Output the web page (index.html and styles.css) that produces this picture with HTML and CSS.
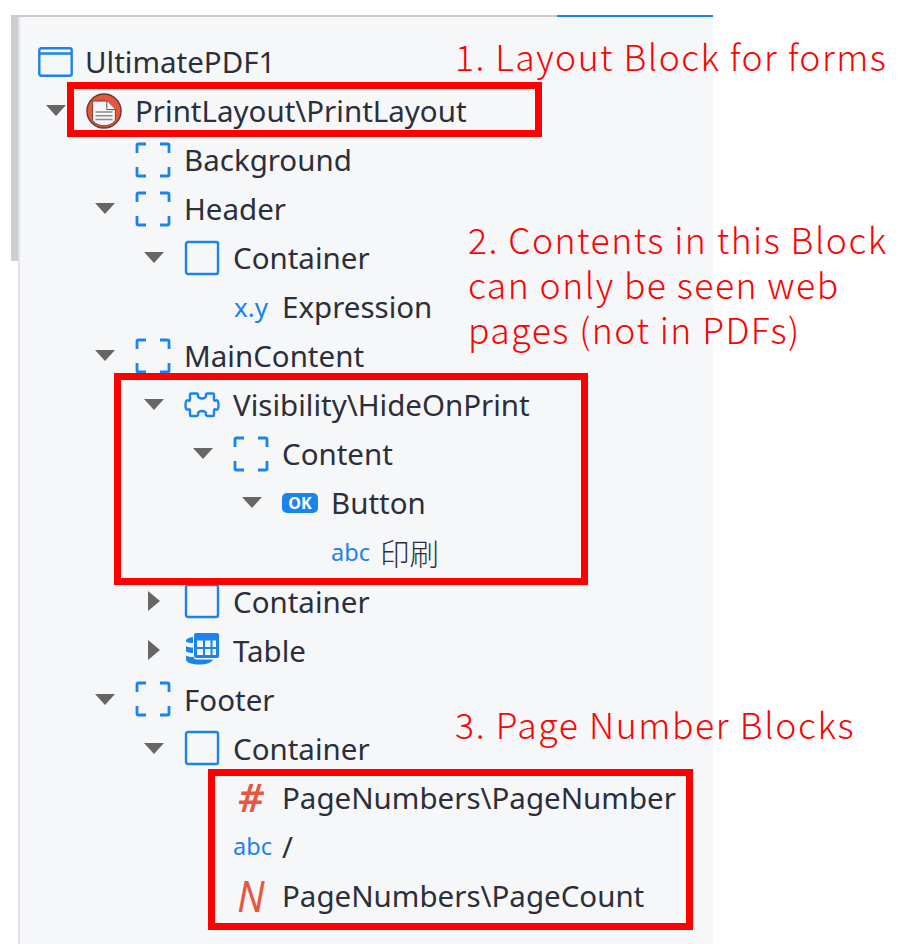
FILE: index.html
```html
<!DOCTYPE html>
<html lang="en">
<head>
    <meta charset="UTF-8">
    <title>Widget tree</title>
    <link rel="stylesheet" href="styles.css">
</head>
<body>
    <svg class="defs" width="0" height="0">
        <symbol id="placeholder" viewBox="0 0 36 36">
            <path d="M2 11V3.500A1.500 1.500 0 0 1 3.500 2H11M25 2h7.500A1.500 1.500 0 0 1 34 3.500V11M34 25v7.500a1.500 1.500 0 0 1-1.500 1.500H25M11 34H3.500A1.500 1.500 0 0 1 2 32.500V25" fill="none" stroke="#1b83ee" stroke-width="2.800"/>
        </symbol>
        <symbol id="container" viewBox="0 0 36 36">
            <rect x="2" y="2" width="32" height="32" rx="2" fill="none" stroke="#1b83ee" stroke-width="2.400"/>
        </symbol>
    </svg>

    <div class="frame">
        <div class="scrollbar"></div>
        <div class="panel">
            <ul class="tree">
                <li class="row">
                    <svg class="icon screen-icon" viewBox="0 0 35 30"><rect x="1.300" y="1.300" width="32.400" height="27.400" rx="2" fill="none" stroke="#1b83ee" stroke-width="2.400"/><path d="M1 6.500h33" stroke="#1b83ee" stroke-width="2.400"/></svg>
                    <span>UltimatePDF1</span>
                </li>
                <li class="row lvl-0">
                    <i class="arrow down"></i>
                    <svg class="icon" viewBox="0 0 38 38"><circle cx="19" cy="19" r="18" fill="#e8563f" stroke="#6b3a30" stroke-width="1.500"/><path d="M7 8.500h15l9 9V29a15.500 15.500 0 0 1-24 0z" fill="#f6f6f6" stroke="#6b3a30"/><path d="M22 8.500v9h9" fill="#fff" stroke="#6b3a30"/><path d="M10 20h18M10 24h18M10 28h18" stroke="#8d8d8d" stroke-width="1.500"/></svg>
                    <span>PrintLayout\PrintLayout</span>
                </li>
                <li class="row lvl-1">
                    <i class="arrow"></i>
                    <svg class="icon"><use href="#placeholder"/></svg>
                    <span>Background</span>
                </li>
                <li class="row lvl-1">
                    <i class="arrow down"></i>
                    <svg class="icon"><use href="#placeholder"/></svg>
                    <span>Header</span>
                </li>
                <li class="row lvl-2">
                    <i class="arrow down"></i>
                    <svg class="icon"><use href="#container"/></svg>
                    <span>Container</span>
                </li>
                <li class="row lvl-3">
                    <i class="arrow"></i>
                    <b class="glyph expr">x.y</b>
                    <span>Expression</span>
                </li>
                <li class="row lvl-1">
                    <i class="arrow down"></i>
                    <svg class="icon"><use href="#placeholder"/></svg>
                    <span>MainContent</span>
                </li>
                <li class="row lvl-2">
                    <i class="arrow down"></i>
                    <svg class="icon" viewBox="-1 -5 36 36"><path d="M6 1.500H11.500C13 1.500 13.500 2.500 13 3.500C12.500 5 14.500 6.500 17 6.500C19.500 6.500 21.500 5 21 3.500C20.500 2.500 21 1.500 22.500 1.500H28A1 1 0 0 1 29 2.500V7.500C29 8.800 30 9 31 8.500C32.500 7.500 33.500 9.500 33.500 13C33.500 16.500 32.500 18.500 31 17.500C30 17 29 17.200 29 18.500V23A1 1 0 0 1 28 24H22.500C21 24 20.500 23 21 22C21.500 20.500 19.500 19 17 19C14.500 19 12.500 20.500 13 22C13.500 23 13 24 11.500 24H6A1 1 0 0 1 5 23V18.500C5 17.200 4 17 3 17.500C1.500 18.500 .5 16.500 .5 13C.5 9.500 1.500 7.500 3 8.500C4 9 5 8.800 5 7.500V2.500A1 1 0 0 1 6 1.500Z" fill="none" stroke="#1b83ee" stroke-width="2.400"/></svg>
                    <span>Visibility\HideOnPrint</span>
                </li>
                <li class="row lvl-3">
                    <i class="arrow down"></i>
                    <svg class="icon"><use href="#placeholder"/></svg>
                    <span>Content</span>
                </li>
                <li class="row lvl-4">
                    <i class="arrow down"></i>
                    <b class="glyph ok">OK</b>
                    <span>Button</span>
                </li>
                <li class="row lvl-5">
                    <i class="arrow"></i>
                    <b class="glyph abc">abc</b>
                    <span class="jp">印刷</span>
                </li>
                <li class="row lvl-2">
                    <i class="arrow right"></i>
                    <svg class="icon"><use href="#container"/></svg>
                    <span>Container</span>
                </li>
                <li class="row lvl-2">
                    <i class="arrow right"></i>
                    <svg class="icon" viewBox="0 0 36 36"><path d="M2 9c0-2 3-3.500 7-4v6c-3.500 0-7-.5-7-2zM2 14c2 1 4.500 1.500 7 1.500V21c-4 0-7-1-7-2.500zM2 23.500c2 1 4.500 1.500 7.500 1.500.5 1.500 1.500 2.500 3 2.500H29c-1.500 3.500-7 5-13 5-8 0-14-2-14-5z" fill="#1b83ee"/><path d="M12 1h21a2 2 0 0 1 2 2v21a2 2 0 0 1-2 2H12a2 2 0 0 1-2-2V3a2 2 0 0 1 2-2z" fill="#1b83ee"/><path d="M13 8.500h6v6.500h-6zM21 8.500h5.500v6.500H21zM28.500 8.500H32v6.500h-3.500zM13 17h6v6h-6zM21 17h5.500v6H21zM28.500 17H32v6h-3.500z" fill="#f6f7f9"/></svg>
                    <span>Table</span>
                </li>
                <li class="row lvl-1">
                    <i class="arrow down"></i>
                    <svg class="icon"><use href="#placeholder"/></svg>
                    <span>Footer</span>
                </li>
                <li class="row lvl-2">
                    <i class="arrow down"></i>
                    <svg class="icon"><use href="#container"/></svg>
                    <span>Container</span>
                </li>
                <li class="row lvl-3">
                    <i class="arrow"></i>
                    <b class="glyph sym">#</b>
                    <span>PageNumbers\PageNumber</span>
                </li>
                <li class="row lvl-3">
                    <i class="arrow"></i>
                    <b class="glyph abc">abc</b>
                    <span>/</span>
                </li>
                <li class="row lvl-3">
                    <i class="arrow"></i>
                    <b class="glyph sym sym-n">N</b>
                    <span>PageNumbers\PageCount</span>
                </li>
            </ul>
        </div>
    </div>

    <!-- annotations drawn on top of the screenshot -->
    <div class="box box-1"></div>
    <div class="box box-2"></div>
    <div class="box box-3"></div>
    <p class="note note-1">1. Layout Block for forms</p>
    <p class="note note-2">2. Contents in this Block<br>can only be seen web<br>pages (not in PDFs)</p>
    <p class="note note-3">3. Page Number Blocks</p>
</body>
</html>
```

FILE: styles.css
```css
html, body {
    margin: 0;
    height: 944px;
    overflow: hidden;
    background: #fff;
}
body {
    position: relative;
    padding: 15px 0 0 11px;
    box-sizing: border-box;
    font-family: "Noto Sans", sans-serif;
    color: #2c2f3a;
}
.defs {
    position: absolute;
}
.frame {
    display: flex;
    width: 702px;
    height: 929px;
    box-sizing: border-box;
    border-top: 2px solid #cbcbcb;
    position: relative;
}
.frame::after {
    content: "";
    position: absolute;
    top: -2px;
    right: 0;
    width: 156px;
    height: 2px;
    background: #1b83ee;
}
.scrollbar {
    flex: none;
    width: 7px;
    height: 244px;
    background: #cdced2;
}
.panel {
    flex: 1;
    background: #f6f7f9;
    border-left: 2px solid #e2e3e6;
}
.tree {
    list-style: none;
    margin: 0;
    padding: 20px 0 0;
}
.row {
    display: flex;
    align-items: center;
    height: 49.060px;
    padding-left: 18px;
    font-size: 29.500px;
    white-space: nowrap;
}
.lvl-0 { padding-left: 26px; }
.lvl-1 { padding-left: 75px; }
.lvl-2 { padding-left: 124px; }
.lvl-3 { padding-left: 173px; }
.lvl-4 { padding-left: 222px; }
.lvl-5 { padding-left: 271px; }

.arrow {
    flex: none;
    width: 20px;
    height: 0;
    margin-right: 20px;
    box-sizing: border-box;
}
.arrow.down {
    border-left: 10px solid transparent;
    border-right: 10px solid transparent;
    border-top: 11px solid #666;
}
.arrow.right {
    width: 12px;
    margin: 0 24px 0 4px;
    border-top: 10px solid transparent;
    border-bottom: 10px solid transparent;
    border-left: 12px solid #666;
}
.icon {
    flex: none;
    width: 36px;
    height: 36px;
    margin-right: 13px;
}
.screen-icon {
    width: 35px;
    height: 30px;
    margin-right: 12px;
}
.glyph {
    flex: none;
    width: 36px;
    margin-right: 13px;
    text-align: center;
}
.expr {
    color: #1b83ee;
    font-size: 26px;
    font-weight: 400;
}
.abc {
    color: #1b83ee;
    font-size: 23.500px;
    font-weight: 400;
}
.ok {
    height: 20px;
    line-height: 20px;
    border-radius: 5px;
    background: #1b83ee;
    color: #fff;
    font-size: 16px;
    font-weight: 700;
}
.sym {
    color: #e8563f;
    font-size: 40px;
    line-height: 40px;
    font-weight: 600;
    font-style: italic;
}
.sym-n {
    font-size: 44px;
    font-weight: 400;
    transform: scaleX(0.88);
}
.jp {
    font-family: "Noto Sans CJK JP", sans-serif;
    font-weight: 300;
}

.box {
    position: absolute;
    border: 7px solid #f00;
    box-sizing: border-box;
}
.box-1 { left: 67px; top: 82px; width: 475px; height: 55px; }
.box-2 { left: 114px; top: 373px; width: 474px; height: 212px; }
.box-3 { left: 208px; top: 769px; width: 485px; height: 161px; }

.note {
    position: absolute;
    margin: 0;
    color: #f00;
    font-family: "Noto Sans CJK JP", sans-serif;
    font-weight: 300;
    font-size: 35.500px;
    letter-spacing: 1.500px;
    line-height: 45px;
    white-space: nowrap;
}
.note-1 { left: 455px; top: 33px; }
.note-2 { left: 468px; top: 216px; }
.note-3 { left: 455px; top: 701px; letter-spacing: 1.650px; }
```
